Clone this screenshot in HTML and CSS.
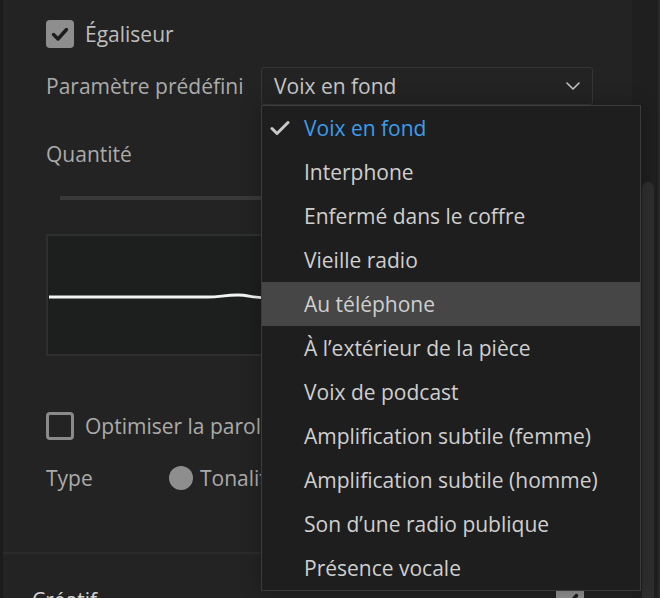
FILE: index.html
```html
<!DOCTYPE html>
<html lang="fr">
<head>
<meta charset="utf-8">
<link rel="stylesheet" href="styles.css">
</head>
<body>
<div class="app">
  <main class="panel">
    <div class="row check-row first">
      <span class="checkbox checked">
        <svg viewBox="0 0 28 28" width="28" height="28"><path d="M7.5 14.5 L12 19 L20.5 9.5" fill="none" stroke="#1d1d1d" stroke-width="3.4" stroke-linecap="round" stroke-linejoin="round"/></svg>
      </span>
      <span class="label bright">Égaliseur</span>
    </div>

    <div class="row preset-row">
      <span class="label field-label">Paramètre prédéfini</span>
      <div class="select">
        <span class="select-value">Voix en fond</span>
        <svg class="chevron" viewBox="0 0 14 8" width="14" height="8"><path d="M1 1 L7 7 L13 1" fill="none" stroke="#c4c4c4" stroke-width="1.6" stroke-linecap="round" stroke-linejoin="round"/></svg>
      </div>
    </div>

    <div class="label quantity">Quantité</div>
    <div class="track"></div>

    <div class="graph">
      <svg viewBox="0 0 547 120" width="547" height="120" preserveAspectRatio="none">
        <path d="M1 61 L160 61 C172 61 176 59 190 59 C200 59 206 62 220 62 L547 62" fill="none" stroke="#f4f4f4" stroke-width="2.8"/>
      </svg>
    </div>

    <div class="row check-row optim">
      <span class="checkbox"></span>
      <span class="label">Optimiser la parole</span>
    </div>

    <div class="row type-row">
      <span class="label type-label">Type</span>
      <span class="radio"></span>
      <span class="label">Tonalité</span>
    </div>

    <div class="divider"></div>

    <div class="row section-row">
      <span class="section-title">Créatif</span>
      <span class="checkbox checked">
        <svg viewBox="0 0 28 28" width="28" height="28"><path d="M7.5 14.5 L12 19 L20.5 9.5" fill="none" stroke="#1d1d1d" stroke-width="3.4" stroke-linecap="round" stroke-linejoin="round"/></svg>
      </span>
    </div>

    <ul class="menu">
      <li class="item selected">
        <svg class="tick" viewBox="0 0 20 16" width="20" height="16"><path d="M2 8.5 L7 13.5 L18 2.5" fill="none" stroke="#c8c8c8" stroke-width="3" stroke-linecap="round" stroke-linejoin="round"/></svg>
        Voix en fond
      </li>
      <li class="item">Interphone</li>
      <li class="item">Enfermé dans le coffre</li>
      <li class="item">Vieille radio</li>
      <li class="item hover">Au téléphone</li>
      <li class="item">À l’extérieur de la pièce</li>
      <li class="item">Voix de podcast</li>
      <li class="item">Amplification subtile (femme)</li>
      <li class="item">Amplification subtile (homme)</li>
      <li class="item">Son d’une radio publique</li>
      <li class="item">Présence vocale</li>
    </ul>
  </main>
  <aside class="scrollbar">
    <div class="thumb"></div>
  </aside>
</div>
</body>
</html>
```
FILE: styles.css
```css
* { box-sizing: border-box; }
html, body {
  margin: 0;
  padding: 0;
  width: 660px;
  height: 598px;
  overflow: hidden;
  background: #232323;
  font-family: "Open Sans", "Noto Sans", "DejaVu Sans", sans-serif;
  font-size: 21px;
  color: #b4b4b4;
}
.app {
  display: grid;
  grid-template-columns: 632px 28px;
  height: 598px;
  overflow: hidden;
}
.panel {
  position: relative;
  border-left: 3px solid #1c1c1c;
  padding-left: 43px;
  height: 598px;
}
.row {
  display: flex;
  align-items: center;
}
.label {
  line-height: 24px;
  white-space: nowrap;
  color: #ababab;
}
.bright { color: #bdbdbd; }
.check-row { height: 28px; gap: 11px; }
.first { margin-top: 20px; }
.checkbox {
  width: 28px;
  height: 28px;
  flex: none;
  border: 3px solid #8a8a8a;
  border-radius: 4px;
  display: flex;
  align-items: center;
  justify-content: center;
}
.checkbox.checked {
  background: #8e8e8e;
  border: none;
}
.preset-row {
  margin-top: 19px;
  height: 38px;
}
.field-label { width: 215px; }
.select {
  width: 332px;
  height: 38px;
  border: 1px solid #363636;
  border-radius: 3px;
  display: flex;
  align-items: center;
  justify-content: space-between;
  padding: 0 12px 0 12px;
}
.select-value { color: #c6c6c6; line-height: 24px; }
.quantity { margin-top: 37px; }
.track {
  margin-top: 30px;
  margin-left: 14px;
  width: 533px;
  height: 4px;
  background: #393939;
}
.graph {
  margin-top: 34px;
  width: 547px;
  height: 122px;
  border: 2px solid #2f2f2f;
  background: #1d1e1e;
}
.graph svg { display: block; }
.optim { margin-top: 56px; }
.type-row {
  margin-top: 24px;
  height: 28px;
}
.type-label { width: 123px; }
.radio {
  width: 24px;
  height: 24px;
  border-radius: 50%;
  background: #8e8e8e;
  margin-right: 7px;
  flex: none;
}
.divider {
  margin-top: 60px;
  margin-left: -43px;
  height: 2px;
  background: #2b2b2b;
}
.section-row {
  margin-left: -14px;
  margin-top: 32px;
  justify-content: space-between;
  padding-right: 48px;
}
.section-title {
  font-size: 21px;
  line-height: 24px;
  color: #d2d2d2;
}
.menu {
  position: absolute;
  z-index: 5;
  left: 258px;
  top: 105px;
  width: 380px;
  margin: 0;
  padding: 0;
  list-style: none;
  background: #1e1e1e;
  border: 1px solid #3b3b3b;
  box-shadow: 0 0 18px rgba(0,0,0,0.25);
}
.item {
  position: relative;
  height: 44px;
  display: flex;
  align-items: center;
  padding-left: 42px;
  color: #cfcfcf;
  white-space: nowrap;
  line-height: 24px;
}
.item.selected { color: #3d9ceb; }
.item.hover { background: #464646; }
.tick {
  position: absolute;
  left: 8px;
  top: 14px;
}
.scrollbar {
  background: #1f1f1f;
  border-right: 2px solid #2a2a2a;
  padding-top: 182px;
  padding-left: 10px;
}
.thumb {
  width: 12px;
  height: 420px;
  background: #2e2e2e;
  border-radius: 6px 6px 0 0;
}
```
